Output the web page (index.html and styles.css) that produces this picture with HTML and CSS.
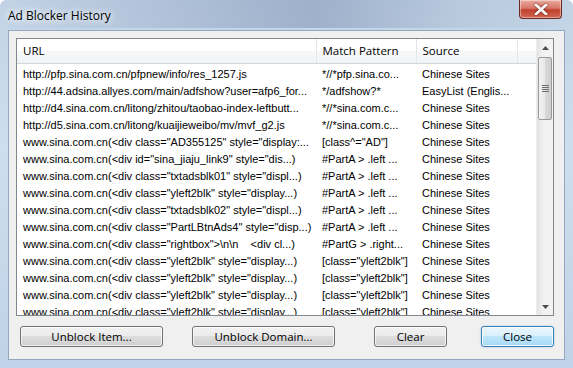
FILE: index.html
```html
<!DOCTYPE html>
<html lang="en">
<head>
    <meta charset="UTF-8">
    <title>Ad Blocker History</title>
    <link rel="stylesheet" href="styles.css">
</head>
<body>

<div class="window">
    <div class="titlebar">
        <span class="title">Ad Blocker History</span>
        <div class="close-x">
            <svg width="14" height="11" viewBox="0 0 14 11">
                <path d="M2 1 L12 10 M12 1 L2 10" stroke="#fff" stroke-width="2.6" stroke-linecap="square"/>
            </svg>
        </div>
    </div>

    <div class="client">
        <div class="list">
            <div class="list-body">
                <table class="grid">
                    <colgroup>
                        <col class="c-url">
                        <col class="c-pat">
                        <col class="c-src">
                        <col>
                    </colgroup>
                    <thead>
                        <tr>
                            <th>URL</th>
                            <th>Match Pattern</th>
                            <th>Source</th>
                            <th class="blank"></th>
                        </tr>
                    </thead>
                    <tbody>
                        <tr><td>http://pfp.sina.com.cn/pfpnew/info/res_1257.js</td><td>*//*pfp.sina.co...</td><td>Chinese Sites</td><td></td></tr>
                        <tr><td>http://44.adsina.allyes.com/main/adfshow?user=afp6_for...</td><td>*/adfshow?*</td><td>EasyList (Englis...</td><td></td></tr>
                        <tr><td>http://d4.sina.com.cn/litong/zhitou/taobao-index-leftbutt...</td><td>*//*sina.com.c...</td><td>Chinese Sites</td><td></td></tr>
                        <tr><td>http://d5.sina.com.cn/litong/kuaijieweibo/mv/mvf_g2.js</td><td>*//*sina.com.c...</td><td>Chinese Sites</td><td></td></tr>
                        <tr><td>www.sina.com.cn(&lt;div class="AD355125" style="display:...</td><td>[class^="AD"]</td><td>Chinese Sites</td><td></td></tr>
                        <tr><td>www.sina.com.cn(&lt;div id="sina_jiaju_link9" style="dis...)</td><td>#PartA &gt; .left ...</td><td>Chinese Sites</td><td></td></tr>
                        <tr><td>www.sina.com.cn(&lt;div class="txtadsblk01" style="displ...)</td><td>#PartA &gt; .left ...</td><td>Chinese Sites</td><td></td></tr>
                        <tr><td>www.sina.com.cn(&lt;div class="yleft2blk" style="display...)</td><td>#PartA &gt; .left ...</td><td>Chinese Sites</td><td></td></tr>
                        <tr><td>www.sina.com.cn(&lt;div class="txtadsblk02" style="displ...)</td><td>#PartA &gt; .left ...</td><td>Chinese Sites</td><td></td></tr>
                        <tr><td>www.sina.com.cn(&lt;div class="PartLBtnAds4" style="disp...)</td><td>#PartA &gt; .left ...</td><td>Chinese Sites</td><td></td></tr>
                        <tr><td>www.sina.com.cn(&lt;div class="rightbox"&gt;\n\n&nbsp;&nbsp;&nbsp;&nbsp;&lt;div cl...)</td><td>#PartG &gt; .right...</td><td>Chinese Sites</td><td></td></tr>
                        <tr><td>www.sina.com.cn(&lt;div class="yleft2blk" style="display...)</td><td>[class="yleft2blk"]</td><td>Chinese Sites</td><td></td></tr>
                        <tr><td>www.sina.com.cn(&lt;div class="yleft2blk" style="display...)</td><td>[class="yleft2blk"]</td><td>Chinese Sites</td><td></td></tr>
                        <tr><td>www.sina.com.cn(&lt;div class="yleft2blk" style="display...)</td><td>[class="yleft2blk"]</td><td>Chinese Sites</td><td></td></tr>
                        <tr><td>www.sina.com.cn(&lt;div class="yleft2blk" style="display...)</td><td>[class="yleft2blk"]</td><td>Chinese Sites</td><td></td></tr>
                    </tbody>
                </table>
            </div>
            <div class="vscroll">
                <div class="arrow">
                    <svg width="7" height="4" viewBox="0 0 7 4"><path d="M0 4 L3.5 0 L7 4 Z" fill="#4d4d4d"/></svg>
                </div>
                <div class="thumb">
                    <span></span><span></span><span></span><span></span>
                </div>
                <div class="track"></div>
                <div class="arrow">
                    <svg width="7" height="4" viewBox="0 0 7 4"><path d="M0 0 L3.5 4 L7 0 Z" fill="#4d4d4d"/></svg>
                </div>
            </div>
        </div>

        <div class="buttons">
            <button class="btn wide">Unblock Item...</button>
            <button class="btn wide second">Unblock Domain...</button>
            <button class="btn small clear">Clear</button>
            <button class="btn small close default">Close</button>
        </div>
    </div>
</div>

</body>
</html>
```

FILE: styles.css
```css
* {
    box-sizing: border-box;
}

body {
    margin: 0;
    width: 573px;
    height: 368px;
    overflow: hidden;
    font-family: "Open Sans", "Liberation Sans", sans-serif;
}

.window {
    width: 573px;
    height: 368px;
    display: flex;
    flex-direction: column;
    background:
        linear-gradient(90deg, rgba(120,140,170,0) 0%, rgba(90,110,150,0.35) 55%, rgba(120,140,170,0.15) 80%, rgba(120,140,170,0) 100%) 0 0 / 100% 28px no-repeat,
        linear-gradient(180deg, #c2d3e6 0%, #cfdeee 40%, #bfd2e7 100%);
    border-radius: 6px 6px 0 0;
}

.titlebar {
    height: 30px;
    display: flex;
    justify-content: space-between;
    align-items: flex-start;
    padding-left: 8px;
    padding-right: 11px;
}

.title {
    font-size: 12px;
    color: #000;
    margin-top: 7px;
    text-shadow: 0 0 6px #fff, 0 0 8px #fff;
}

.close-x {
    width: 43px;
    height: 19px;
    display: flex;
    align-items: center;
    justify-content: center;
    border: 1px solid #6d2a22;
    border-top: none;
    border-radius: 0 0 4px 4px;
    background: linear-gradient(180deg, #e9a99a 0%, #d7786a 45%, #c2412e 55%, #d0644f 100%);
    box-shadow: inset 0 0 1px 1px rgba(255,255,255,0.45);
}

.close-x svg {
    filter: drop-shadow(0 0 1px #5a1a10);
}

.client {
    flex: 1;
    margin: 0 8px 8px 8px;
    background: #f0f0f0;
    border: 1px solid #93a7be;
    padding: 7px 10px 0 7px;
    display: flex;
    flex-direction: column;
}

.list {
    height: 278px;
    border: 1px solid #828790;
    background: #fff;
    display: flex;
}

.list-body {
    flex: 1;
    overflow: hidden;
}

.grid {
    width: 100%;
    border-collapse: collapse;
    table-layout: fixed;
}

.c-url { width: 299px; }
.c-pat { width: 100px; }
.c-src { width: 101px; }

.grid th {
    height: 24px;
    font-weight: normal;
    font-size: 11.5px;
    text-align: left;
    padding: 0 0 1px 6px;
    color: #000;
    background: linear-gradient(180deg, #ffffff 0%, #ffffff 50%, #f7f8fa 51%, #f1f2f4 100%);
    border-right: 1px solid #e3e5e8;
    border-bottom: 1px solid #d5d5d5;
}

.grid th.blank {
    border-right: none;
}

.grid td {
    height: 17px;
    padding: 0 0 0 6px;
    font-family: "Liberation Sans", Arial, sans-serif;
    font-size: 11px;
    color: #000;
    white-space: pre;
    overflow: hidden;
}

.grid tbody tr:first-child td {
    padding-top: 2px;
    height: 19px;
}

.vscroll {
    width: 17px;
    display: flex;
    flex-direction: column;
    background: linear-gradient(90deg, #e3e3e3 0%, #f2f2f2 40%, #f2f2f2 100%);
    border-left: 1px solid #ececec;
}

.vscroll .arrow {
    height: 17px;
    display: flex;
    align-items: center;
    justify-content: center;
}

.thumb {
    height: 63px;
    margin: 1px 1px 0 1px;
    border: 1px solid #9a9a9a;
    border-radius: 2px;
    background: linear-gradient(90deg, #f3f3f3 0%, #e8e8e8 50%, #d9d9d9 51%, #cfcfcf 100%);
    display: flex;
    flex-direction: column;
    align-items: center;
    justify-content: center;
    gap: 1px;
}

.thumb span {
    width: 7px;
    height: 1px;
    background: #6e6e6e;
}

.track {
    flex: 1;
}

.buttons {
    display: flex;
    padding-left: 4px;
    margin-top: 10px;
}

.btn {
    height: 21px;
    font-family: "Open Sans", "Liberation Sans", sans-serif;
    font-size: 11.5px;
    color: #000;
    padding: 0 0 1px 0;
    border: 1px solid #707070;
    border-radius: 3px;
    background: linear-gradient(180deg, #f2f2f2 0%, #ebebeb 49%, #dddddd 50%, #cfcfcf 100%);
    box-shadow: inset 0 0 0 1px rgba(255,255,255,0.7);
}

.wide {
    width: 143px;
}

.small {
    width: 73px;
}

.second {
    margin-left: 29px;
}

.clear {
    margin-left: 39px;
}

.close {
    margin-left: 34px;
}

.default {
    border-color: #3c7fb1;
    background: linear-gradient(180deg, #eaf6fd 0%, #d9f0fc 49%, #bee6fd 50%, #a7d9f5 100%);
    box-shadow: inset 0 0 0 1px rgba(255,255,255,0.8), 0 0 2px #8fc3ea;
}
```
